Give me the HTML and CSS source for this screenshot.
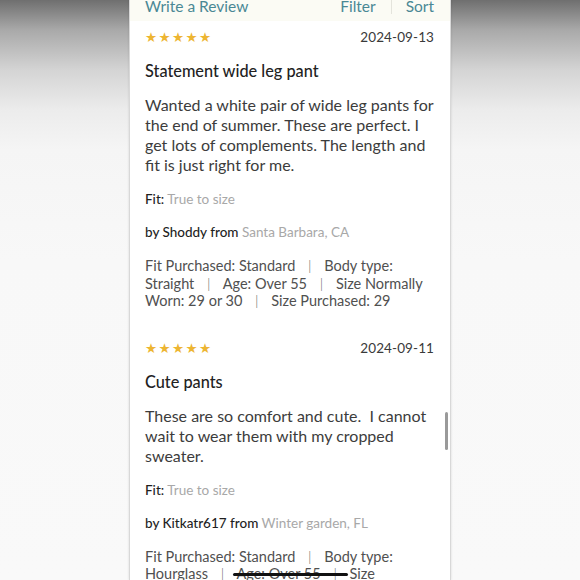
FILE: index.html
```html
<!DOCTYPE html>
<html lang="en">
<head>
<meta charset="utf-8">
<title>Reviews</title>
<link rel="stylesheet" href="styles.css">
</head>
<body>
<div class="screen">
  <div class="toolbar">
    <span class="tool-link">Write a Review</span>
    <div class="tool-right">
      <span class="tool-link">Filter</span>
      <span class="tool-divider"></span>
      <span class="tool-link">Sort</span>
    </div>
  </div>

  <div class="review">
    <div class="review-top">
      <span class="stars">★★★★★</span>
      <span class="date">2024-09-13</span>
    </div>
    <h2 class="title">Statement wide leg pant</h2>
    <p class="body">Wanted a white pair of wide leg pants for the end of summer. These are perfect. I get lots of complements. The length and fit is just right for me.</p>
    <p class="fit"><span class="label">Fit:</span> <span class="muted">True to size</span></p>
    <p class="author"><span class="label">by Shoddy from</span> <span class="muted">Santa Barbara, CA</span></p>
    <p class="meta">Fit Purchased: Standard <span class="sep">|</span> Body type: Straight <span class="sep">|</span> Age: Over 55 <span class="sep">|</span> Size Normally Worn: 29 or 30 <span class="sep">|</span> Size Purchased: 29</p>
  </div>

  <div class="review">
    <div class="review-top">
      <span class="stars">★★★★★</span>
      <span class="date">2024-09-11</span>
    </div>
    <h2 class="title">Cute pants</h2>
    <p class="body">These are so comfort and cute.&nbsp; I cannot wait to wear them with my cropped sweater.</p>
    <p class="fit"><span class="label">Fit:</span> <span class="muted">True to size</span></p>
    <p class="author"><span class="label">by Kitkatr617 from</span> <span class="muted">Winter garden, FL</span></p>
    <p class="meta">Fit Purchased: Standard <span class="sep">|</span> Body type: Hourglass <span class="sep">|</span> <span class="redacted">Age: Over 55 <span class="sep">|</span></span> Size Normally Worn: 29 or 30 <span class="sep">|</span> Size Purchased: 29</p>
  </div>

  <div class="scrollbar"></div>
</div>
</body>
</html>
```
FILE: styles.css
```css
* { box-sizing: border-box; }

html, body {
  margin: 0;
  padding: 0;
  height: 100%;
}

body {
  background: linear-gradient(to bottom, #6f6f6f 0px, #a9a9a9 30px, #d4d4d4 70px, #ececec 110px, #f5f5f5 150px, #f8f8f8 260px, #f9f9f9 100%);
  font-family: Lato, "Open Sans", sans-serif;
  overflow: hidden;
}

.screen {
  position: relative;
  width: 320px;
  height: 580px;
  margin-left: 130px;
  background: #ffffff;
  box-shadow: -1px 0 0 #d8d8d8, 1px 0 0 #d8d8d8, 0 0 3px rgba(0,0,0,0.25);
  overflow: hidden;
}

.toolbar {
  height: 21px;
  background: #fbfbf4;
  display: flex;
  justify-content: space-between;
  align-items: flex-start;
  padding: 0 16px 0 15px;
  color: #4a8894;
  font-size: 15.5px;
  line-height: 13px;
}

.tool-right {
  display: flex;
  align-items: flex-start;
}

.tool-divider {
  width: 1px;
  height: 14px;
  background: #e4e4dc;
  margin: 0 14px 0 15px;
}

.review {
  padding: 7px 16px 22px 15px;
  color: #3a3a3a;
}

.review-top {
  display: flex;
  justify-content: space-between;
  align-items: center;
  height: 18px;
}

.stars {
  color: #edb532;
  font-family: "DejaVu Sans", sans-serif;
  font-size: 13.5px;
  letter-spacing: 1.4px;
  line-height: 18px;
}

.date {
  font-size: 13.5px;
  color: #3a3a3a;
  line-height: 18px;
  letter-spacing: 0.1px;
}

.title {
  margin: 15px 0 0;
  font-size: 16.3px;
  font-weight: 500;
  line-height: 20px;
  color: #222;
}

.body {
  margin: 14px 0 0;
  font-size: 16px;
  line-height: 20px;
  color: #3c3c3c;
}

.fit, .author {
  margin: 16px 0 0;
  font-size: 13.5px;
  line-height: 17px;
}

.label {
  color: #1f1f1f;
  font-weight: 500;
}

.muted {
  color: #a8a8a8;
}

.meta {
  margin: 16px 0 0;
  font-size: 14.5px;
  line-height: 17.5px;
  color: #505050;
}

.sep {
  margin: 0 9px;
  font-weight: 300;
  color: #666;
}

.redacted {
  position: relative;
}

.redacted::after {
  content: "";
  position: absolute;
  left: -3px;
  right: -2px;
  top: 8px;
  height: 3px;
  border-radius: 2px;
  background: #111;
}

.scrollbar {
  position: absolute;
  left: 315px;
  top: 412px;
  width: 3px;
  height: 38px;
  border-radius: 2px;
  background: #9a9a9a;
}
```
